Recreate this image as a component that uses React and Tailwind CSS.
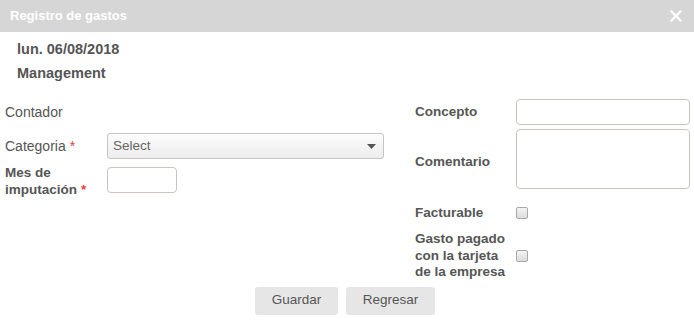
const Required = () => <span className="text-[#e8413a] ml-[4px]">*</span>;

const Checkbox = () => (
  <span className="block w-[12px] h-[12px] rounded-[2px] border border-[#a8a8a8] bg-gradient-to-b from-[#f4f4f4] to-[#dcdcdc]" />
);

const App = () => {
  return (
    <div className="w-[694px] h-[326px] bg-white text-[13.5px] text-[#555] font-['Liberation_Sans',Arial,sans-serif] overflow-hidden">
      <div className="h-[32px] bg-[#d6d6d6] flex items-center justify-between pl-[10px] pr-[10px] text-[13px]">
        <span className="text-white font-bold">Registro de gastos</span>
        <svg width="12" height="12" viewBox="0 0 12 12" className="mr-[2px]">
          <path d="M1.5 1.5 L10.5 10.5 M10.5 1.5 L1.5 10.5" stroke="#fff" strokeWidth="2.4" strokeLinecap="square" />
        </svg>
      </div>

      <div className="pl-[17px] pt-[9px] font-bold leading-[16px] text-[14.5px]">
        <div>lun. 06/08/2018</div>
        <div className="mt-[8px]">Management</div>
      </div>

      <div className="flex mt-[18px]">
        <div className="w-[415px] pl-[5px]">
          <div className="h-[26px] flex items-center text-[14px]">Contador</div>
          <div className="h-[26px] mt-[8px] flex items-center">
            <div className="w-[102px] text-[14px]">
              Categoria<Required />
            </div>
            <div className="w-[277px] h-[26px] rounded-[3px] border border-[#c4c4c4] bg-gradient-to-b from-[#fdfdfd] to-[#ececec] flex items-center justify-between pl-[5px] pr-[7px]">
              <span className="text-[#666] leading-none">Select</span>
              <svg width="9" height="5" viewBox="0 0 9 5">
                <path d="M0 0 H9 L4.5 5 Z" fill="#555" />
              </svg>
            </div>
          </div>
          <div className="mt-[8px] flex items-start">
            <div className="w-[102px] font-bold leading-[17px] -mt-[3px]">
              Mes de
              <br />
              imputación<Required />
            </div>
            <div className="w-[70px] h-[26px] rounded-[4px] border border-[#c9c3be]" />
          </div>
        </div>

        <div className="w-[279px] font-bold">
          <div className="h-[26px] flex items-center">
            <div className="w-[101px]">Concepto</div>
            <div className="w-[174px] h-[26px] rounded-[4px] border border-[#c9c3be]" />
          </div>
          <div className="h-[60px] mt-[4px] flex items-center">
            <div className="w-[101px] mt-[6px]">Comentario</div>
            <div className="w-[174px] h-[60px] rounded-[4px] border border-[#c9c3be]" />
          </div>
          <div className="h-[18px] mt-[15px] flex items-center">
            <div className="w-[101px]">Facturable</div>
            <Checkbox />
          </div>
          <div className="mt-[9px] flex items-center">
            <div className="w-[101px] leading-[16.5px]">
              Gasto pagado
              <br />
              con la tarjeta
              <br />
              de la empresa
            </div>
            <Checkbox />
          </div>
        </div>
      </div>

      <div className="flex justify-center gap-[8px] mt-[6px] pr-[4px]">
        <button className="w-[83px] h-[28px] rounded-[3px] bg-[#e6e6e6] text-[#555] font-normal">Guardar</button>
        <button className="w-[89px] h-[28px] rounded-[3px] bg-[#e6e6e6] text-[#555] font-normal">Regresar</button>
      </div>
    </div>
  );
};

export default App;
